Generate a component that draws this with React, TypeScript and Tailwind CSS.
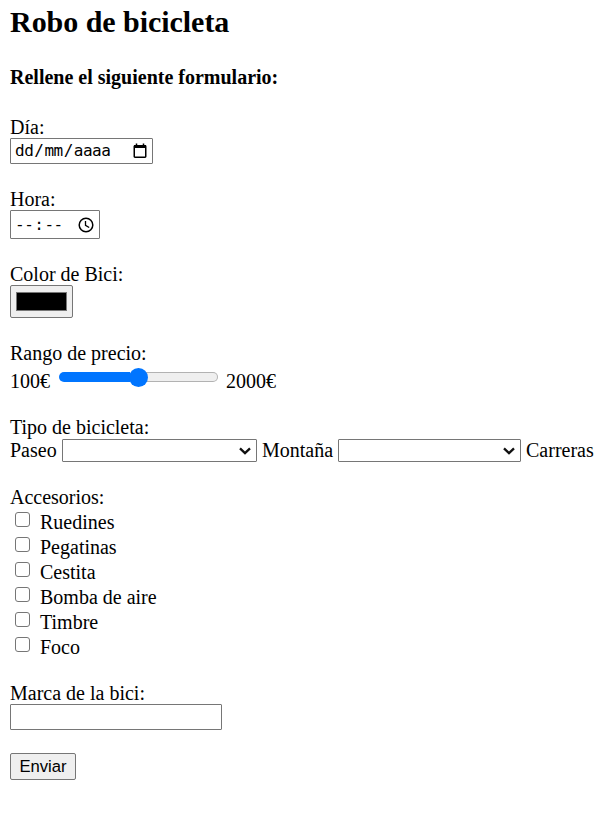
import type { ReactNode } from 'react';

const accessories = ['Ruedines', 'Pegatinas', 'Cestita', 'Bomba de aire', 'Timbre', 'Foco'];

function Label({ children }: { children: ReactNode }) {
  return <div className="h-[23px] whitespace-nowrap leading-[25px]">{children}</div>;
}

function SelectBox({ label, width }: { label: string; width: string }) {
  return (
    <button
      type="button"
      aria-label={label}
      className={`flex h-[23px] shrink-0 items-center justify-end rounded-[1px] border border-[#767676] bg-white pr-[5px] ${width}`}
    >
      <svg width="12" height="8" viewBox="0 0 12 8" fill="none" stroke="#101010" strokeWidth="2.3">
        <path d="M1 1.3 L6 6.1 L11 1.3" />
      </svg>
    </button>
  );
}

export default function App() {
  return (
    <main className="h-[831px] w-[597px] overflow-hidden bg-white pl-[10px] font-['Liberation_Serif',serif] text-[20px] leading-[23px] text-black">
      <h1 className="h-[66px] pt-[5px] text-[30px] leading-[34px] font-bold tracking-[-0.04px]">Robo de bicicleta</h1>
      <h3 className="h-[49px] text-[20px] leading-[23px] font-bold">Rellene el siguiente formulario:</h3>

      <form>
        <section className="h-[72px]">
          <Label>Día:</Label>
          <div className="flex h-[26px] w-[143px] items-center justify-between rounded-[1px] border border-[#767676] pr-[5px] pl-[4px] font-['DejaVu_Sans_Mono',monospace] text-[16px] leading-[20px] tracking-[-0.5px]">
            <span className="flex gap-[1px]">
              <span>dd</span><span>/</span><span>mm</span><span>/</span><span>aaaa</span>
            </span>
            <svg width="14" height="16" viewBox="0 0 14 16" fill="none" stroke="#000">
              <rect x="1.25" y="2.75" width="11.5" height="11.5" rx="0.7" strokeWidth="1.5" />
              <path d="M1 3.5H13" strokeWidth="3" />
              <path d="M3.5 0.5V3M10.5 0.5V3" strokeWidth="1.5" />
            </svg>
          </div>
        </section>

        <section className="h-[75px]">
          <Label>Hora:</Label>
          <div className="flex h-[29px] w-[90px] items-center justify-between rounded-[1px] border border-[#767676] pr-[4px] pl-[4px] font-['DejaVu_Sans_Mono',monospace] text-[16px] leading-[20px] tracking-[-0.5px]">
            <span className="flex gap-[1px]">
              <span>--</span><span>:</span><span>--</span>
            </span>
            <svg width="18" height="18" viewBox="0 0 18 18" fill="none" stroke="#000">
              <circle cx="9" cy="9" r="6.8" strokeWidth="1.5" />
              <path d="M8.5 5V9.3L12.2 11.5" strokeWidth="1.3" />
            </svg>
          </div>
        </section>

        <section className="h-[79px]">
          <Label>Color de Bici:</Label>
          <button type="button" aria-label="Color de Bici" className="flex h-[33px] w-[63px] items-center justify-center rounded-[2px] border border-[#767676] bg-[#efefef]">
            <span className="h-[19px] w-[51px] border border-[#777777] bg-black" />
          </button>
        </section>

        <section className="h-[74px]">
          <Label>Rango de precio:</Label>
          <div className="flex h-[33px] items-start pt-[3px]">
            <span className="w-[49px] pt-[3px]">100€</span>
            <div className="flex h-[20px] w-[159px] items-center">
              <div className="h-[10px] w-[71px] rounded-l-full bg-[#0075ff]" />
              <div className="z-10 -mx-[1px] h-[19px] w-[19px] shrink-0 rounded-full bg-[#0075ff]" />
              <div className="-ml-[4px] h-[10px] flex-1 rounded-r-full border border-l-0 border-[#b2b2b2] bg-[#efefef]" />
            </div>
            <span className="pt-[3px] pl-[8px]">2000€</span>
          </div>
        </section>

        <section className="h-[70px]">
          <Label>Tipo de bicicleta:</Label>
          <div className="flex h-[24px] items-start gap-[5px] whitespace-nowrap pt-[1px]">
            <span className="w-[47px] shrink-0">Paseo</span>
            <SelectBox label="Paseo" width="w-[195px]" />
            <span className="w-[71px] shrink-0">Montaña</span>
            <SelectBox label="Montaña" width="w-[183px]" />
            <span className="shrink-0">Carreras</span>
          </div>
        </section>

        <section className="h-[196px]">
          <div className="h-[25px] leading-[25px]">Accesorios:</div>
          {accessories.map((name) => (
            <label key={name} className="flex h-[25px] items-start pl-[5px] leading-[25px]">
              <input type="checkbox" className="mt-[2px] mr-[10px] h-[15px] w-[15px] appearance-none rounded-[3px] border border-[#767676] bg-white" />
              <span>{name}</span>
            </label>
          ))}
        </section>

        <section className="h-[72px]">
          <Label>Marca de la bici:</Label>
          <input aria-label="Marca de la bici" className="block h-[26px] w-[212px] rounded-[1px] border border-[#767676] bg-white px-1" />
        </section>
        <button type="button" className="block h-[27px] w-[66px] rounded-[2px] border border-[#767676] bg-[#efefef] font-['Liberation_Sans',sans-serif] text-[16.67px] leading-[24px]">
          Enviar
        </button>
      </form>
    </main>
  );
}
